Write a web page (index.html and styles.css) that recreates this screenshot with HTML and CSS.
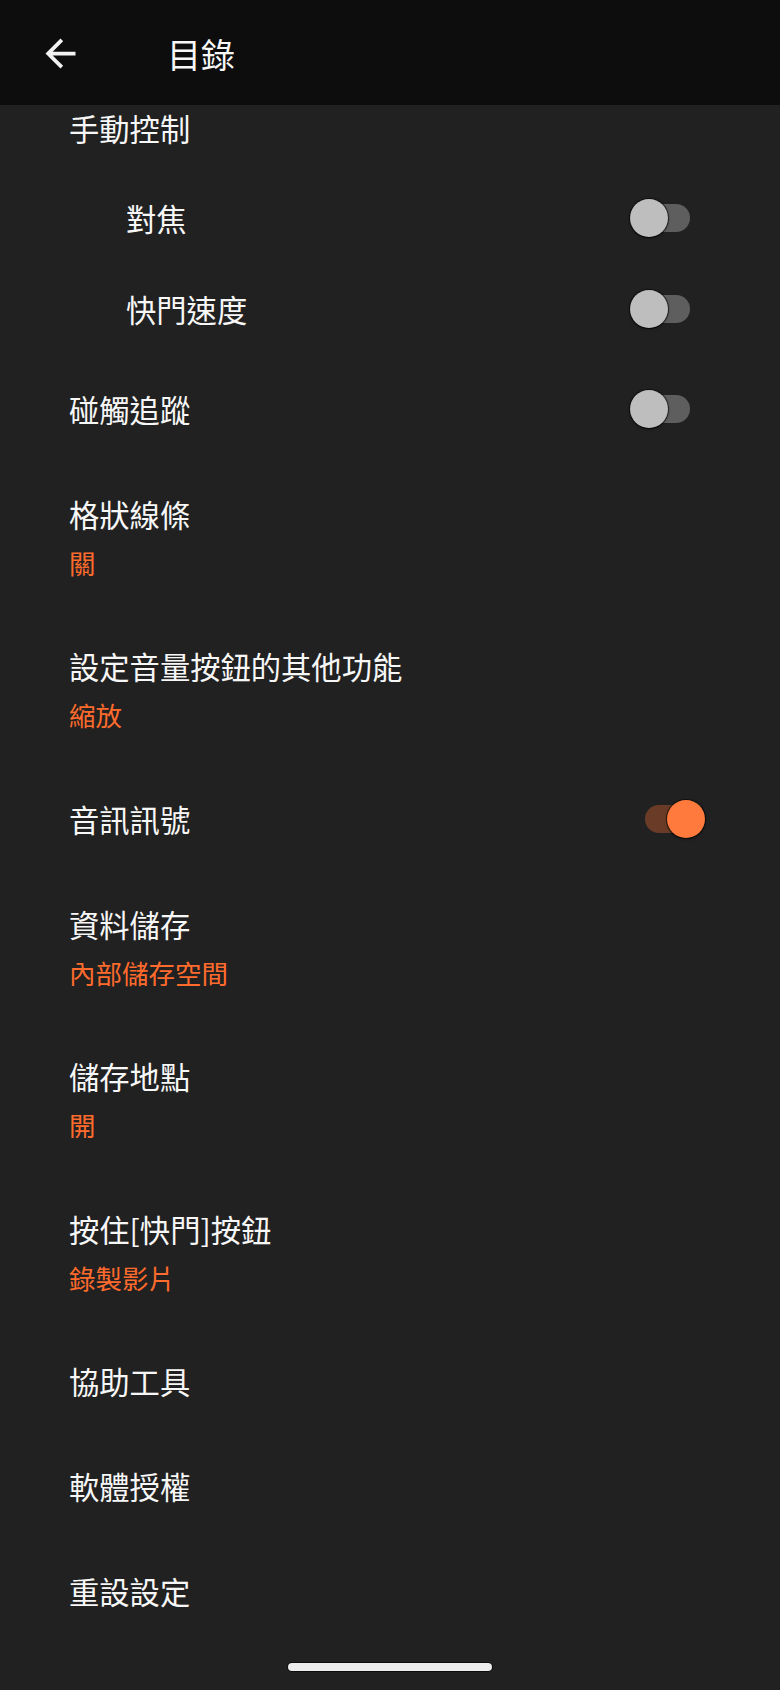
FILE: index.html
```html
<!DOCTYPE html>
<html lang="zh-Hant">
<head>
<meta charset="utf-8">
<title>目錄</title>
<link rel="stylesheet" href="styles.css">
</head>
<body>
<header class="appbar">
  <svg class="back" viewBox="0 0 24 24" width="45" height="45" aria-hidden="true">
    <path d="M20 11H7.83l5.59-5.59L12 4l-8 8 8 8 1.41-1.41L7.83 13H20v-2z" fill="#f2f2f2"/>
  </svg>
  <h1 class="title">目錄</h1>
</header>

<main class="list">
  <div class="category">手動控制</div>

  <div class="item sub">
    <div class="label">對焦</div>
    <div class="switch off"><span class="track"></span><span class="thumb"></span></div>
  </div>
  <div class="item sub last">
    <div class="label">快門速度</div>
    <div class="switch off"><span class="track"></span><span class="thumb"></span></div>
  </div>

  <div class="item first-main">
    <div class="label">碰觸追蹤</div>
    <div class="switch off"><span class="track"></span><span class="thumb"></span></div>
  </div>

  <div class="item two">
    <div class="text">
      <div class="label">格狀線條</div>
      <div class="summary">關</div>
    </div>
  </div>

  <div class="item two">
    <div class="text">
      <div class="label">設定音量按鈕的其他功能</div>
      <div class="summary">縮放</div>
    </div>
  </div>

  <div class="item">
    <div class="label">音訊訊號</div>
    <div class="switch on"><span class="track"></span><span class="thumb"></span></div>
  </div>

  <div class="item two">
    <div class="text">
      <div class="label">資料儲存</div>
      <div class="summary">內部儲存空間</div>
    </div>
  </div>

  <div class="item two">
    <div class="text">
      <div class="label">儲存地點</div>
      <div class="summary">開</div>
    </div>
  </div>

  <div class="item two">
    <div class="text">
      <div class="label">按住[快門]按鈕</div>
      <div class="summary">錄製影片</div>
    </div>
  </div>

  <div class="item"><div class="label">協助工具</div></div>
  <div class="item"><div class="label">軟體授權</div></div>
  <div class="item"><div class="label">重設設定</div></div>
</main>

<div class="homebar"></div>
</body>
</html>
```

FILE: styles.css
```css
html, body {
  margin: 0;
  padding: 0;
}

body {
  width: 780px;
  height: 1690px;
  overflow: hidden;
  background: #212121;
  color: #f7f7f7;
  font-family: "Noto Sans CJK TC", "Noto Sans CJK SC", "Noto Sans", sans-serif;
  position: relative;
}

.appbar {
  height: 105px;
  box-sizing: border-box;
  padding: 2px 0 0 38px;
  background: #0d0d0d;
  display: flex;
  align-items: center;
}

.back {
  display: block;
  flex: none;
}

.title {
  margin: 0 0 0 84px;
  font-size: 34px;
  font-weight: 400;
  line-height: 44px;
  color: #f7f7f7;
}

.list {
  display: flex;
  flex-direction: column;
}

.category {
  padding: 3px 0 24px 69px;
  font-size: 30.3px;
  line-height: 40px;
}

.item {
  display: flex;
  align-items: center;
  justify-content: space-between;
  box-sizing: border-box;
  padding: 32.5px 0 32.5px 69px;
  min-height: 105px;
}

.item.first-main {
  padding-top: 33.5px;
  min-height: 106px;
}

.item.sub {
  padding: 25.5px 0 25.5px 126px;
  min-height: 91px;
}

.item.sub.last {
  padding-bottom: 26.5px;
  min-height: 92px;
}

.item.two {
  min-height: 152.5px;
}

.label {
  font-size: 30.3px;
  line-height: 40px;
  white-space: nowrap;
}

.summary {
  margin-top: 11px;
  font-size: 26.5px;
  line-height: 36px;
  color: #ff6b2c;
}

.switch {
  position: relative;
  width: 60px;
  height: 40px;
  flex: none;
}

.switch.off {
  margin-right: 90px;
}

.switch.on {
  margin-right: 75px;
}

.track {
  position: absolute;
  top: 6px;
  width: 55px;
  height: 28px;
  border-radius: 14px;
}

.thumb {
  position: absolute;
  top: 1px;
  width: 38px;
  height: 38px;
  border-radius: 50%;
  box-shadow: 0 0 0 1px rgba(0, 0, 0, 0.55), 0 1px 3px rgba(0, 0, 0, 0.5);
}

.off .track {
  left: 5px;
  background: #5e5e5e;
}

.off .thumb {
  left: 0;
  background: #bebebe;
}

.on .track {
  left: 0;
  background: #6a3c28;
}

.on .thumb {
  left: 22px;
  background: #ff7a3c;
}

.homebar {
  position: absolute;
  left: 288px;
  top: 1663px;
  width: 204px;
  height: 8px;
  border-radius: 4px;
  background: #ececec;
  box-shadow: 0 0 0 1px rgba(0, 0, 0, 0.6);
}
```
